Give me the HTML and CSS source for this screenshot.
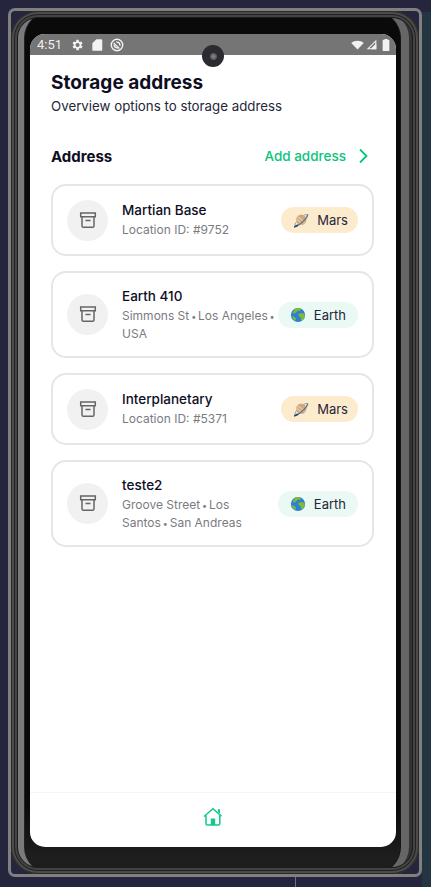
FILE: index.html
```html
<!DOCTYPE html>
<html>
<head>
    <title>Storage address</title>
    <link rel="stylesheet" href="styles.css">
</head>
<body>
    <div class="device">
        <div class="bezel">
            <div class="screen">
                <div class="status-bar">
                    <span class="status-time">4:51</span>
                    <svg class="status-icon" viewBox="0 0 24 24"><path d="M19.4 13a7.6 7.6 0 0 0 0-2l2.100-1.600-2-3.500-2.500 1a7.600 7.600 0 0 0-1.700-1L15 3.200h-4l-.4 2.700a7.600 7.600 0 0 0-1.700 1l-2.500-1-2 3.500L6.500 11a7.600 7.600 0 0 0 0 2l-2.100 1.600 2 3.500 2.500-1a7.600 7.600 0 0 0 1.700 1l.4 2.700h4l.4-2.700a7.600 7.600 0 0 0 1.700-1l2.500 1 2-3.500zM13 15.500a3.500 3.500 0 1 1 0-7 3.500 3.500 0 0 1 0 7z"/></svg>
                    <svg class="status-icon" viewBox="0 0 24 24"><path d="M11 2h8a2 2 0 0 1 2 2v16a2 2 0 0 1-2 2H6a2 2 0 0 1-2-2V9z"/></svg>
                    <svg class="status-icon" viewBox="0 0 24 24"><path fill-rule="evenodd" d="M12 1a11 11 0 1 1 0 22 11 11 0 0 1 0-22zm0 2.400a8.600 8.600 0 1 0 0 17.200 8.600 8.600 0 0 0 0-17.200zm-5 4.200 9.800 9.600-1.600 1.500L5.400 9.100zM12 6a6 6 0 0 1 6 6c0 .8-.2 1.600-.5 2.300l-1.800-1.800A3.800 3.800 0 0 0 11.500 8.300L9.700 6.500A6 6 0 0 1 12 6zM8.300 11.500a3.800 3.800 0 0 0 4.200 4.200l1.800 1.800A6 6 0 0 1 6.500 9.700z"/></svg>
                    <span class="status-space"></span>
                    <svg class="status-wifi" viewBox="0 0 24 18"><path d="M12 17.500.5 5.500C3.500 2.500 7.500 1 12 1s8.500 1.500 11.500 4.500z"/></svg>
                    <svg class="status-signal" viewBox="0 0 16 16"><path fill-rule="evenodd" d="M15 1v14H1zm-1.500 3.600L4.600 13.500h8.900z"/><path d="M15 6v9H8v-2z"/></svg>
                    <svg class="status-battery" viewBox="0 0 10 16"><path d="M3 1V0h4v1h1.500A1 1 0 0 1 9.500 2v13a1 1 0 0 1-1 1h-7a1 1 0 0 1-1-1V2a1 1 0 0 1 1-1z"/></svg>
                </div>
                <div class="camera"><span class="camera-lens"></span></div>

                <div class="content">
                    <h1 class="title">Storage address</h1>
                    <p class="subtitle">Overview options to storage address</p>

                    <div class="section-head">
                        <span class="section-title">Address</span>
                        <span class="add-link">
                            Add address
                            <svg class="chevron" viewBox="0 0 10 16"><path d="M2 1.500 8.500 8 2 14.500"/></svg>
                        </span>
                    </div>

                    <div class="card-list">
                        <div class="card">
                            <div class="card-icon">
                                <svg viewBox="0 0 20 20"><path d="M2.700 3h14.600v3.700H2.700zM4 6.700V16a1.300 1.300 0 0 0 1.300 1.300h9.400A1.300 1.300 0 0 0 16 16V6.700M7.500 10.500h5"/></svg>
                            </div>
                            <div class="card-text">
                                <div class="card-name">Martian Base</div>
                                <div class="card-sub">Location ID: #9752</div>
                            </div>
                            <div class="pill pill-mars">
                                <svg class="planet" viewBox="0 0 18 18"><use href="#mars-icon"/></svg>
                                Mars
                            </div>
                        </div>

                        <div class="card">
                            <div class="card-icon">
                                <svg viewBox="0 0 20 20"><path d="M2.700 3h14.600v3.700H2.700zM4 6.700V16a1.300 1.300 0 0 0 1.300 1.300h9.400A1.300 1.300 0 0 0 16 16V6.700M7.500 10.500h5"/></svg>
                            </div>
                            <div class="card-text">
                                <div class="card-name">Earth 410</div>
                                <div class="card-sub">Simmons St <span class="dot">•</span> Los Angeles <span class="dot">•</span><br>USA</div>
                            </div>
                            <div class="pill pill-earth">
                                <svg class="planet" viewBox="0 0 18 18"><use href="#earth-icon"/></svg>
                                Earth
                            </div>
                        </div>

                        <div class="card">
                            <div class="card-icon">
                                <svg viewBox="0 0 20 20"><path d="M2.700 3h14.600v3.700H2.700zM4 6.700V16a1.300 1.300 0 0 0 1.300 1.300h9.400A1.300 1.300 0 0 0 16 16V6.700M7.500 10.500h5"/></svg>
                            </div>
                            <div class="card-text">
                                <div class="card-name">Interplanetary</div>
                                <div class="card-sub">Location ID: #5371</div>
                            </div>
                            <div class="pill pill-mars">
                                <svg class="planet" viewBox="0 0 18 18"><use href="#mars-icon"/></svg>
                                Mars
                            </div>
                        </div>

                        <div class="card">
                            <div class="card-icon">
                                <svg viewBox="0 0 20 20"><path d="M2.700 3h14.600v3.700H2.700zM4 6.700V16a1.300 1.300 0 0 0 1.300 1.300h9.400A1.300 1.300 0 0 0 16 16V6.700M7.500 10.500h5"/></svg>
                            </div>
                            <div class="card-text">
                                <div class="card-name">teste2</div>
                                <div class="card-sub">Groove Street <span class="dot">•</span> Los<br>Santos <span class="dot">•</span> San Andreas</div>
                            </div>
                            <div class="pill pill-earth">
                                <svg class="planet" viewBox="0 0 18 18"><use href="#earth-icon"/></svg>
                                Earth
                            </div>
                        </div>
                    </div>
                </div>

                <div class="bottom-nav">
                    <svg class="home-icon" viewBox="0 0 20 20">
                        <path class="home-line" d="M1 9.500 10 1.800l8.500 7.500M3 8.500v8.200A1.300 1.300 0 0 0 4.300 18h11.200a1.300 1.300 0 0 0 1.300-1.300V8.500"/>
                        <path class="home-fill" d="M14.800 2.300h2.200v4.500l-2.200-2zM7.800 11.500h4.400V18H7.800z"/>
                    </svg>
                </div>
            </div>
        </div>
    </div>

    <svg class="defs" width="0" height="0">
        <defs>
            <g id="mars-icon">
                <ellipse cx="9" cy="9" rx="9" ry="2.300" transform="rotate(-42 9 9)" fill="none" stroke="#8d9cae" stroke-width="1"/>
                <circle cx="9.300" cy="8.700" r="5.800" fill="#d2a77c"/>
                <path d="M5 5.500c2.500 1 6 3.500 8 6.800M4 8.500c2 .8 4.500 3 5.800 5.700" stroke="#e8d2b2" stroke-width="1.200" fill="none"/>
                <path d="M1.500 16.500c3.200-.5 7.500-3.300 11-7s4.500-5.500 4-7" stroke="#4c6f98" stroke-width="1.300" fill="none"/>
                <path d="M1.300 16.700c1.300-.2 2.700-.8 4.200-1.700" stroke="#2b4668" stroke-width="1.900" fill="none"/>
            </g>
            <g id="earth-icon">
                <circle cx="9" cy="9" r="8" fill="#2c7fd6"/>
                <path d="M6 1.600c2.500-.6 5-.5 6.800.6L11 4.500 8.500 4.300 7 6.200 4.600 7.500 3 6.200zM9.500 7.500l3.800-.8 2.900 1.300.8 2.700-2.600 4-2 .2-.4-3.200-2.400-1.500zM2 10.500l3 .6 1.800 2-.8 2.700A8 8 0 0 1 2 10.500z" fill="#7dba35"/>
            </g>
        </defs>
    </svg>
</body>
</html>
```

FILE: styles.css
```css
* {
    box-sizing: border-box;
}
body {
    margin: 0;
    width: 431px;
    height: 887px;
    overflow: hidden;
    padding: 8px 9px 10px 8px;
    background: linear-gradient(#233540, #233540) right 12px / 9px 875px no-repeat,
        linear-gradient(#6f7080, #6f7080) 295px 877px / 1px 10px no-repeat,
        #25263e;
    font-family: Inter, "Noto Sans", sans-serif;
    color: #0e0e1f;
}
.defs {
    display: block;
}
.device {
    height: 100%;
    border: 3px solid #808080;
    border-radius: 7px;
    background-color: #25263e;
}
.bezel {
    height: 100%;
    padding: 23px 23px 27px 19px;
    border-radius: 27px;
    background: linear-gradient(#0a0a0a 92%, #1e1e1e 98%);
    /* rings all round, then the wider bands on the two long sides */
    box-shadow: inset 0 0 0 1px #2a2a2a, inset 0 0 0 3px #4c4c4c, inset 0 0 0 4px #222222, inset 0 0 0 6px #444444, inset 0 0 0 7px #1c1c1c,
        inset 3px 0 0 #333333, inset 5px 0 0 #555555, inset 6px 0 0 #222222, inset 13px 0 0 #7a7a7a, inset 14px 0 0 #222222,
        inset -1px 0 0 #555555, inset -6px 0 0 #686868, inset -10px 0 0 #333333, inset -18px 0 0 #666666, inset -19px 0 0 #161616;
}
.screen {
    position: relative;
    height: 100%;
    display: flex;
    flex-direction: column;
    border-radius: 15px;
    overflow: hidden;
    background-color: #ffffff;
}
.status-bar {
    display: flex;
    align-items: center;
    flex-shrink: 0;
    height: 21px;
    padding: 0 3px 0 7px;
    background-color: #757575;
    fill: #f2f2f2;
}
.status-time {
    margin-right: 8px;
    font-family: Roboto, sans-serif;
    font-size: 13px;
    color: #eeeeee;
}
.status-icon {
    width: 14px;
    height: 14px;
    margin-right: 6px;
}
.status-space {
    flex: 1;
}
.status-wifi {
    width: 13px;
    height: 10px;
    margin-right: 2px;
}
.status-signal {
    width: 11px;
    height: 11px;
    margin-right: 5px;
}
.status-battery {
    width: 8px;
    height: 12px;
    margin-right: 3px;
}
.camera {
    position: absolute;
    left: 172px;
    top: 11px;
    width: 22px;
    height: 22px;
    border-radius: 50%;
    background-color: #2c2c30;
    display: flex;
    align-items: center;
    justify-content: center;
}
.camera-lens {
    width: 7px;
    height: 7px;
    border-radius: 50%;
    background: radial-gradient(#8a8a90, #3c3c42);
}
.content {
    flex: 1;
    padding: 16px 22px 0 21px;
}
.title {
    margin: 0;
    font-size: 19px;
    line-height: 24px;
    font-weight: 700;
}
.subtitle {
    margin: 2px 0 0;
    font-size: 13.3px;
    line-height: 18px;
    color: #26263a;
}
.section-head {
    display: flex;
    align-items: center;
    justify-content: space-between;
    height: 24px;
    margin-top: 29px;
}
.section-title {
    font-size: 15px;
    font-weight: 700;
}
.add-link {
    display: flex;
    align-items: center;
    gap: 12px;
    padding-right: 6px;
    font-size: 13.5px;
    font-weight: 500;
    color: #0cc47c;
}
.chevron {
    width: 10px;
    height: 16px;
    fill: none;
    stroke: #0cc47c;
    stroke-width: 1.8;
}
.card-list {
    display: flex;
    flex-direction: column;
    gap: 15px;
    margin-top: 16px;
}
.card {
    display: flex;
    align-items: center;
    padding: 13.5px 14px;
    border: 2px solid #e6e6e6;
    border-radius: 15px;
}
.card-icon {
    display: flex;
    align-items: center;
    justify-content: center;
    flex-shrink: 0;
    width: 41px;
    height: 41px;
    margin-right: 14px;
    border-radius: 50%;
    background-color: #f1f1f1;
}
.card-icon svg {
    width: 20px;
    height: 20px;
    margin-top: -1px;
    fill: none;
    stroke: #666666;
    stroke-width: 1.5;
}
.card-text {
    flex: 1;
    min-width: 0;
    white-space: nowrap;
}
.card-name {
    margin-top: -1px;
    margin-bottom: 1px;
    font-size: 13.5px;
    line-height: 20px;
    font-weight: 500;
}
.card-sub {
    font-size: 12px;
    line-height: 18px;
    color: #7b7b7f;
}
.dot {
    margin: 0 -1.5px;
    font-size: 9px;
    line-height: 1;
}
.pill {
    display: flex;
    align-items: center;
    flex-shrink: 0;
    gap: 8px;
    height: 26px;
    border-radius: 13px;
    font-size: 13px;
    color: #26263a;
}
.pill-mars {
    padding: 0 10px 0 12px;
    background-color: #fdebce;
}
.pill-earth {
    padding: 0 12px;
    background-color: #ebf9f5;
}
.planet {
    width: 16px;
    height: 16px;
}
.bottom-nav {
    display: flex;
    justify-content: center;
    flex-shrink: 0;
    height: 55px;
    padding-top: 14px;
    border-top: 1px solid #f6f6f6;
}
.home-icon {
    width: 20px;
    height: 20px;
    margin-left: -1px;
}
.home-line {
    fill: none;
    stroke: #12c98a;
    stroke-width: 1.5;
}
.home-fill {
    fill: #12c98a;
}
```
